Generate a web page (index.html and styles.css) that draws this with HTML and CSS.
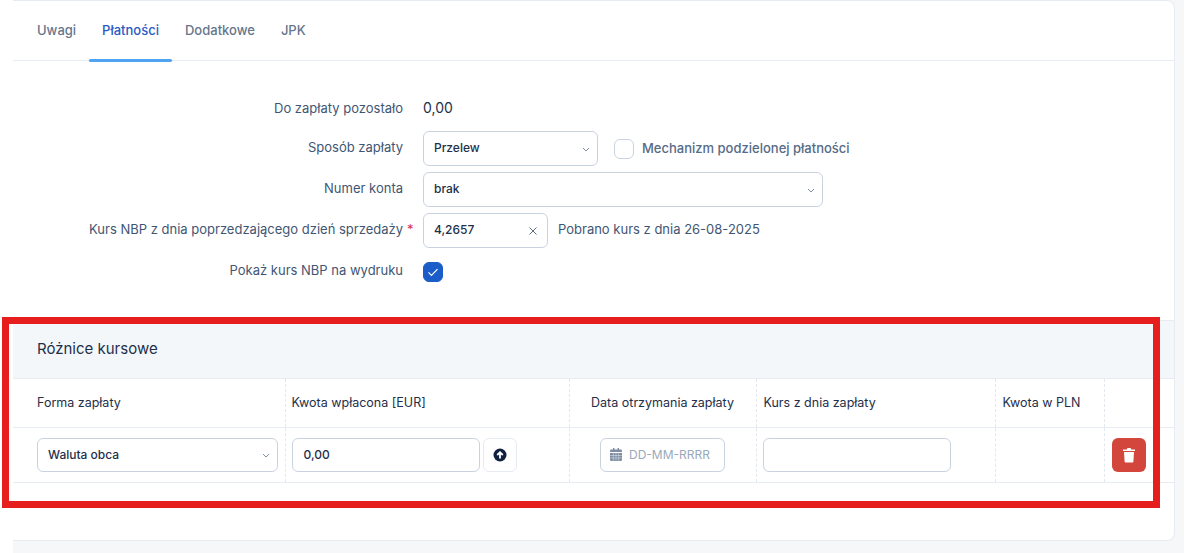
FILE: index.html
```html
<!DOCTYPE html>
<html lang="pl">
<head>
<meta charset="utf-8">
<title>Płatności</title>
<link rel="stylesheet" href="styles.css">
</head>
<body>
<main class="card">
  <nav class="tabs">
    <a class="tab">Uwagi</a>
    <a class="tab active">Płatności</a>
    <a class="tab">Dodatkowe</a>
    <a class="tab">JPK</a>
  </nav>
  <section class="form">
    <div class="row">
      <label class="label first-label">Do zapłaty pozostało</label>
      <span class="value">0,00</span>
    </div>
    <div class="row">
      <label class="label">Sposób zapłaty</label>
      <div class="field select w-175">Przelew<svg class="chev" viewBox="0 0 8 5"><path d="M1 1l3 3 3-3"/></svg></div>
      <span class="box"></span>
      <span class="mech">Mechanizm podzielonej płatności</span>
    </div>
    <div class="row">
      <label class="label">Numer konta</label>
      <div class="field select w-400">brak<svg class="chev" viewBox="0 0 8 5"><path d="M1 1l3 3 3-3"/></svg></div>
    </div>
    <div class="row">
      <label class="label">Kurs NBP z dnia poprzedzającego dzień sprzedaży<i class="req">*</i></label>
      <div class="field select w-125">4,2657<svg class="x" viewBox="0 0 8 8"><path d="M.5.5l7 7M7.5.5l-7 7"/></svg></div>
      <span class="note">Pobrano kurs z dnia 26-08-2025</span>
    </div>
    <div class="row">
      <label class="label">Pokaż kurs NBP na wydruku</label>
      <span class="box checked"><svg viewBox="0 0 20 20"><path d="M5 10.500l3.300 3.300L15 6.800"/></svg></span>
    </div>
  </section>
  <section class="rates">
    <h2 class="rates-title">Różnice kursowe</h2>
    <table class="grid">
      <colgroup>
        <col class="c1"><col class="c2"><col class="c3"><col class="c4"><col class="c5"><col class="c6">
      </colgroup>
      <thead>
        <tr>
          <th class="first">Forma zapłaty</th>
          <th>Kwota wpłacona [EUR]</th>
          <th class="center">Data otrzymania zapłaty</th>
          <th class="inset">Kurs z dnia zapłaty</th>
          <th class="inset">Kwota w PLN</th>
          <th></th>
        </tr>
      </thead>
      <tbody>
        <tr>
          <td class="first"><div class="field select sm">Waluta obca<svg class="chev" viewBox="0 0 8 5"><path d="M1 1l3 3 3-3"/></svg></div></td>
          <td>
            <div class="amount">
              <div class="field sm w-188 num">0,00</div>
              <button class="up" type="button" aria-label="Przelicz"><svg viewBox="0 0 14 14"><circle cx="7" cy="7" r="6.500" fill="#10213f"/><path d="M7 10.600V4.200M4.200 7L7 4.200 9.800 7" fill="none" stroke="#fff" stroke-width="1.800"/></svg></button>
            </div>
          </td>
          <td>
            <div class="field sm date"><svg viewBox="0 0 12 13"><path fill="#7d8ea3" d="M0 5h12v6.700A1.300 1.300 0 0 1 10.700 13H1.300A1.300 1.300 0 0 1 0 11.700zM1.300 1.500H3V0h1.500v1.500h3V0H9v1.500h1.700A1.300 1.300 0 0 1 12 2.800V4H0V2.800a1.300 1.300 0 0 1 1.300-1.300z"/><path stroke="#fff" stroke-width=".4" d="M0 7.500h12M0 10h12M3.300 5v8M6 5v8M8.700 5v8"/></svg><span class="ph">DD-MM-RRRR</span></div>
          </td>
          <td><div class="field sm w-188"></div></td>
          <td></td>
          <td class="act">
            <button class="del" type="button" aria-label="Usuń"><svg viewBox="0 0 14 16"><path fill="#fff" d="M1 2.500h3.800L5.300 1h3.400l.5 1.500H13v1.500H1zM2 5h10l-.6 9.500a1 1 0 0 1-1 1H3.600a1 1 0 0 1-1-1z"/></svg></button>
          </td>
        </tr>
      </tbody>
    </table>
  </section>
</main>
<div class="highlight"></div>
</body>
</html>
```

FILE: styles.css
```css
* { box-sizing: border-box; }
html, body { margin: 0; height: 100%; }
body {
  position: relative;
  height: 553px;
  overflow: hidden;
  padding: 0 9px 0 13px;
  background: linear-gradient(#fff, #fff) left / 13px 100% no-repeat, #f5f7f9;
  font: 13px/20px Inter, "Liberation Sans", sans-serif;
  color: #1e2f4a;
}
.card {
  height: 541px;
  background: #fff;
  border: 1px solid #e7ebf2;
  border-left: 0;
  border-radius: 0 8px 8px 0;
}
.tabs {
  display: flex;
  height: 60px;
  padding-left: 11px;
  border-bottom: 1px solid #e7ebf2;
}
.tab {
  position: relative;
  height: 60px;
  padding: 19px 13px 0;
  color: #66768c;
  font-weight: 500;
}
.tab.active { color: #2a5bc4; }
.tab.active::after {
  content: "";
  position: absolute;
  left: 0;
  right: 0;
  bottom: -1px;
  height: 3px;
  border-radius: 2px;
  background: #4fa3f3;
}
.form {
  display: flex;
  flex-direction: column;
  gap: 6px;
  padding-top: 29px;
  height: 259px;
}
.row {
  display: flex;
  align-items: center;
  height: 35px;
}
.label {
  position: relative;
  width: 390px;
  margin-right: 20px;
  padding-bottom: 4px;
  text-align: right;
  color: #3f5673;
  white-space: nowrap;
}
.first-label { padding-bottom: 0; }
.req {
  position: absolute;
  left: 394px;
  top: 0;
  color: #d8324a;
  font-style: normal;
}
.value { font-size: 14px; color: #1e2f4a; }
.field {
  position: relative;
  display: flex;
  align-items: center;
  height: 35px;
  padding: 0 10px 2px;
  background: #fff;
  border: 1px solid #c9d3df;
  border-radius: 6px;
  font-size: 12px;
  font-weight: 500;
  color: #1e2f4a;
  white-space: nowrap;
}
.field.sm { height: 34px; padding-bottom: 0; }
.field.num { padding-left: 11px; }
.w-175 { width: 175px; }
.w-400 { width: 400px; }
.w-125 { width: 125px; }
.w-188 { width: 188px; }
.chev, .x {
  position: absolute;
  right: 7px;
  top: 50%;
  fill: none;
  stroke: #7d8ea3;
  stroke-width: 1;
}
.chev { width: 8px; height: 5px; margin-top: -2px; }
.x { right: 10px; width: 8px; height: 8px; margin-top: -4px; stroke: #5f6f85; }
.box {
  width: 20px;
  height: 20px;
  margin-left: 16px;
  border: 1px solid #c9d3df;
  border-radius: 6px;
}
.box.checked {
  margin-left: 0;
  background: #1a5cc8;
  border-color: #1a5cc8;
}
.box.checked svg {
  display: block;
  width: 18px;
  height: 18px;
  fill: none;
  stroke: #fff;
  stroke-width: 1.300;
}
.mech { margin-left: 8px; padding-bottom: 2px; color: #566b86; font-weight: 500; }
.note { margin-left: 10px; padding-bottom: 3px; color: #3f5673; }
.rates-title {
  margin: 0;
  height: 59px;
  padding: 18px 24px 0;
  background: #f4f7fa;
  border-top: 1px solid #e7ebf2;
  border-bottom: 1px solid #e7ebf2;
  font-size: 15px;
  line-height: 20px;
  font-weight: 400;
  color: #1e2f4a;
}
.grid {
  width: 1161px;
  table-layout: fixed;
  border-collapse: collapse;
}
.c1 { width: 272px; }
.c2 { width: 284px; }
.c3 { width: 187px; }
.c4 { width: 239px; }
.c5 { width: 109px; }
.grid th, .grid td {
  padding: 0 6px;
  border-right: 1px dashed #e3e7ee;
  border-bottom: 1px solid #e7ebf2;
  text-align: left;
}
.grid th:last-child, .grid td:last-child { border-right: 0; }
.grid th {
  height: 48px;
  font-size: 12.500px;
  font-weight: 400;
  color: #1e2f4a;
}
.grid td { height: 55px; }
.grid th.first, .grid td.first { padding: 0 7px 0 24px; }
.grid th.center { text-align: center; }
.grid th.inset { padding-left: 7px; }
.amount { display: flex; gap: 3px; }
.up {
  display: flex;
  align-items: center;
  justify-content: center;
  width: 34px;
  height: 34px;
  padding: 0;
  background: #fff;
  border: 1px solid #e7ebf2;
  border-radius: 6px;
}
.up svg { width: 14px; height: 14px; }
.date {
  width: 125px;
  margin: 0 auto;
  padding-left: 9px;
  padding-right: 0;
  gap: 7px;
}
.date svg { width: 12px; height: 13px; flex: none; }
.ph { color: #9aa9bb; font-weight: 400; }
.grid td.act { padding-left: 7px; }
.del {
  display: flex;
  align-items: center;
  justify-content: center;
  width: 34px;
  height: 34px;
  padding: 0;
  background: #d2463c;
  border: 0;
  border-radius: 6px;
}
.del svg { width: 14px; height: 16px; }
.highlight {
  position: absolute;
  left: 2px;
  top: 317px;
  width: 1158px;
  height: 191px;
  border: 7px solid #e61e1e;
  pointer-events: none;
}
```
